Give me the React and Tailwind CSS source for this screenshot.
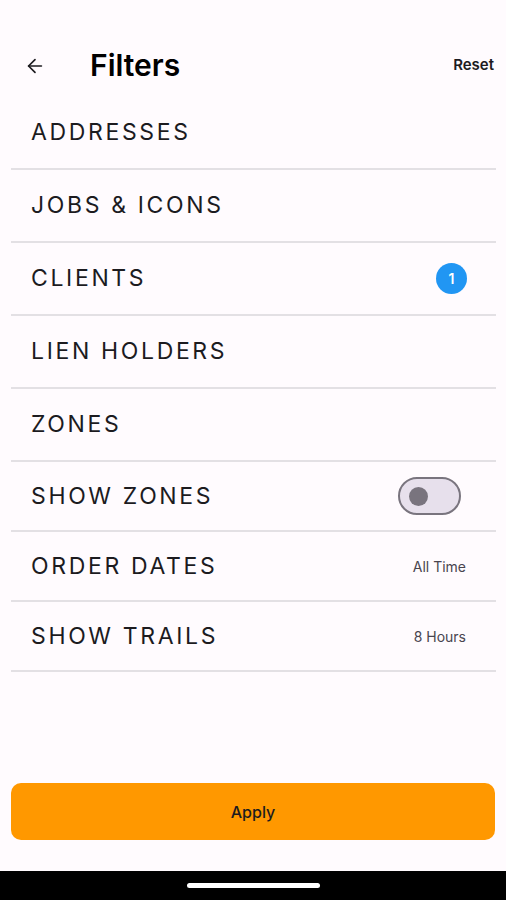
import { ArrowLeft } from 'lucide-react';

const rows = [
  { label: 'ADDRESSES', h: 'h-[71px]' },
  { label: 'JOBS & ICONS', h: 'h-[71px]' },
  { label: 'CLIENTS', h: 'h-[71px]', badge: 1 },
  { label: 'LIEN HOLDERS', h: 'h-[71px]' },
  { label: 'ZONES', h: 'h-[71px]' },
  { label: 'SHOW ZONES', h: 'h-[68px]', toggle: true },
  { label: 'ORDER DATES', h: 'h-[68px]', value: 'All Time' },
  { label: 'SHOW TRAILS', h: 'h-[68px]', value: '8 Hours' },
];

const Row = ({ row }) => (
  <div>
    <div className={`${row.h} flex items-center justify-between pl-[31px] pr-[39px]`}>
      <span className="text-[23px] tracking-[0.115em] text-[#1c1b1f]">{row.label}</span>
      {row.badge && (
        <span className="w-[31px] h-[31px] rounded-full bg-[#2196f3] text-white text-[14px] font-semibold flex items-center justify-center">
          {row.badge}
        </span>
      )}
      {row.toggle && (
        <span className="w-[63px] h-[38px] mr-[6px] rounded-full border-2 border-[#79747e] bg-[#e7e0ec] flex items-center pl-[9px]">
          <span className="w-[19px] h-[19px] rounded-full bg-[#79747e]" />
        </span>
      )}
      {row.value && (
        <span className="text-[14px] text-[#49454f] mr-[1px]">{row.value}</span>
      )}
    </div>
    <div className="ml-[11px] mr-[10px] h-[2px] bg-[#e3e0e4]" />
  </div>
);

export default function App() {
  return (
    <div
      className="h-[900px] w-[506px] flex flex-col bg-[#fffbfe]"
      style={{ fontFamily: 'Inter, "Noto Sans", sans-serif' }}
    >
      <div className="h-[34px]" />
      <div className="h-[63px] flex items-center pl-[24px] pr-[12px]">
        <ArrowLeft size={22} strokeWidth={1.8} className="text-[#1c1b1f]" />
        <h1 className="ml-[44px] text-[30px] font-semibold text-black">Filters</h1>
        <button className="ml-auto text-[15px] font-semibold text-[#1c1b1f]">Reset</button>
      </div>
      <div>
        {rows.map((r) => (
          <Row key={r.label} row={r} />
        ))}
      </div>
      <div className="flex-1" />
      <button className="mx-[11px] h-[57px] rounded-[10px] bg-[#ff9800] text-[16px] font-medium text-[#1c1b1f]">
        Apply
      </button>
      <div className="h-[31px]" />
      <div className="h-[29px] bg-black flex items-center justify-center">
        <div className="w-[133px] h-[5px] rounded-full bg-white" />
      </div>
    </div>
  );
}
